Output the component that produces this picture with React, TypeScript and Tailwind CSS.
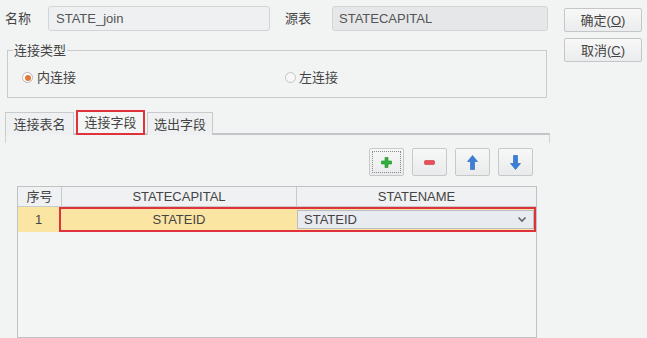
const font = "font-['Liberation_Sans','Noto_Sans_CJK_SC',sans-serif]";

const ToolButton = ({ children, focused }: { children: React.ReactNode; focused?: boolean }) => (
  <button className="w-[35px] h-[28px] rounded-[2px] border border-[#c6c8ca] bg-gradient-to-b from-[#f7f7f7] to-[#e9eaeb] flex items-center justify-center p-[2px]">
    <span
      className={
        "w-full h-full flex items-center justify-center " +
        (focused ? "border border-dotted border-[#8a8a8a]" : "")
      }
    >
      {children}
    </span>
  </button>
);

const PlusIcon = () => (
  <svg width="11" height="11" viewBox="0 0 11 11">
    <path d="M4 0.5h3v3.5h3.5v3h-3.5v3.5h-3v-3.5h-3.5v-3h3.5z" fill="#2fb33a" stroke="#1f8a2a" strokeWidth="0.6" />
  </svg>
);

const MinusIcon = () => (
  <svg width="11" height="5" viewBox="0 0 11 5">
    <rect x="0.5" y="0.5" width="10" height="4" rx="1" fill="#e8505a" stroke="#c93440" strokeWidth="0.6" />
  </svg>
);

const ArrowIcon = ({ down }: { down?: boolean }) => (
  <svg width="11" height="15" viewBox="0 0 11 15" className={down ? "rotate-180" : ""}>
    <path d="M5.5 0.5L10.5 6.5H7.5V14.5H3.5V6.5H0.5Z" fill="#3a7fd9" stroke="#2561b5" strokeWidth="0.6" />
  </svg>
);

export default function App() {
  return (
    <div className={`w-[647px] h-[338px] overflow-hidden bg-[#f2f3f3] text-[13px] leading-[15px] text-[#444] ${font}`}>
      <div className="flex">
        {/* left area */}
        <div className="w-[552px]">
          <div className="flex items-center mt-[6px]">
            <span className="w-[48px] pl-[5px]">名称</span>
            <div className="w-[222px] h-[25px] rounded-[3px] border border-[#d2d5d7] bg-[#eef0f1] flex items-center px-[7px] text-[#555]">
              STATE_join
            </div>
            <span className="w-[62px] pl-[15px]">源表</span>
            <div className="w-[216px] h-[25px] rounded-[3px] border border-[#d2d5d7] bg-[#e5e7e9] flex items-center px-[6px] text-[#555]">
              STATECAPITAL
            </div>
          </div>

          <fieldset className="ml-[7px] w-[540px] mt-[12px] h-[55px] border border-[#c8cacc] px-[14px]">
            <legend className="ml-[-9px] px-[1px]">连接类型</legend>
            <div className="flex items-center mt-[12px]">
              <span className="w-[11px] h-[11px] rounded-full border border-[#b9b9b9] bg-white flex items-center justify-center">
                <span className="w-[6px] h-[6px] rounded-full bg-[#e07a3a]" />
              </span>
              <span className="ml-[4px]">内连接</span>
              <span className="ml-[209px] w-[11px] h-[11px] rounded-full border border-[#c4c4c4] bg-[#f7f7f7]" />
              <span className="ml-[3px]">左连接</span>
            </div>
          </fieldset>

          {/* tabs */}
          <div className="flex items-end mt-[12px] ml-[5px] h-[25px]">
            <div className="h-[23px] w-[69px] border border-b-0 border-[#c8cacc] bg-[#eef0f1] flex items-center justify-center">
              连接表名
            </div>
            <div className="h-[25px] w-[69px] ml-[2px] border-2 border-[#e0323c] bg-[#f4f5f5] flex items-center justify-center">
              连接字段
            </div>
            <div className="h-[23px] w-[66px] ml-[2px] border border-b-0 border-[#c8cacc] bg-[#eef0f1] flex items-center justify-center">
              选出字段
            </div>
          </div>
          <div className="ml-[5px] w-[545px] h-[10px] border-t-2 border-x border-[#d0d2d4] border-t-[#c2c5c8] -mt-[2px]" />

          <div className="flex justify-end gap-[8px] mt-[5px] pr-[19px]">
            <ToolButton focused>
              <PlusIcon />
            </ToolButton>
            <ToolButton>
              <MinusIcon />
            </ToolButton>
            <ToolButton>
              <ArrowIcon />
            </ToolButton>
            <ToolButton>
              <ArrowIcon down />
            </ToolButton>
          </div>

          {/* table */}
          <div className="ml-[17px] mt-[10px] w-[520px] h-[152px] border border-[#bfc1c3] bg-[#f3f4f4]">
            <div className="flex h-[20px] bg-[#f0f1f2] border-b border-[#c8cacc]">
              <div className="w-[44px] border-r border-[#c8cacc] flex items-center justify-center">序号</div>
              <div className="w-[235px] border-r border-[#c8cacc] flex items-center justify-center">STATECAPITAL</div>
              <div className="flex-1 flex items-center justify-center">STATENAME</div>
            </div>
            <div className="flex h-[25px] bg-[#fbe5a2]">
              <div className="w-[41px] flex items-center justify-center">1</div>
              <div className="flex-1 flex border-2 border-[#e0323c]">
                <div className="w-[236px] flex items-center justify-center">STATEID</div>
                <div className="flex-1 my-[1px] border border-[#b9bdc3] bg-[#e8ebf0] flex items-center justify-between pl-[6px] pr-[6px]">
                  <span>STATEID</span>
                  <svg width="10" height="7" viewBox="0 0 10 7">
                    <path d="M1.5 1.5L5 5L8.5 1.5" fill="none" stroke="#666" strokeWidth="1.6" />
                  </svg>
                </div>
              </div>
            </div>
          </div>
        </div>

        {/* right buttons */}
        <div className="ml-[12px] flex flex-col gap-[6px] mt-[8px]">
          <button className="w-[78px] h-[24px] border border-[#c4c6c8] rounded-[2px] bg-gradient-to-b from-[#f8f8f8] to-[#ebeced]">
            确定(<span className="underline">O</span>)
          </button>
          <button className="w-[78px] h-[24px] border border-[#c4c6c8] rounded-[2px] bg-gradient-to-b from-[#f8f8f8] to-[#ebeced]">
            取消(<span className="underline">C</span>)
          </button>
        </div>
      </div>
    </div>
  );
}
